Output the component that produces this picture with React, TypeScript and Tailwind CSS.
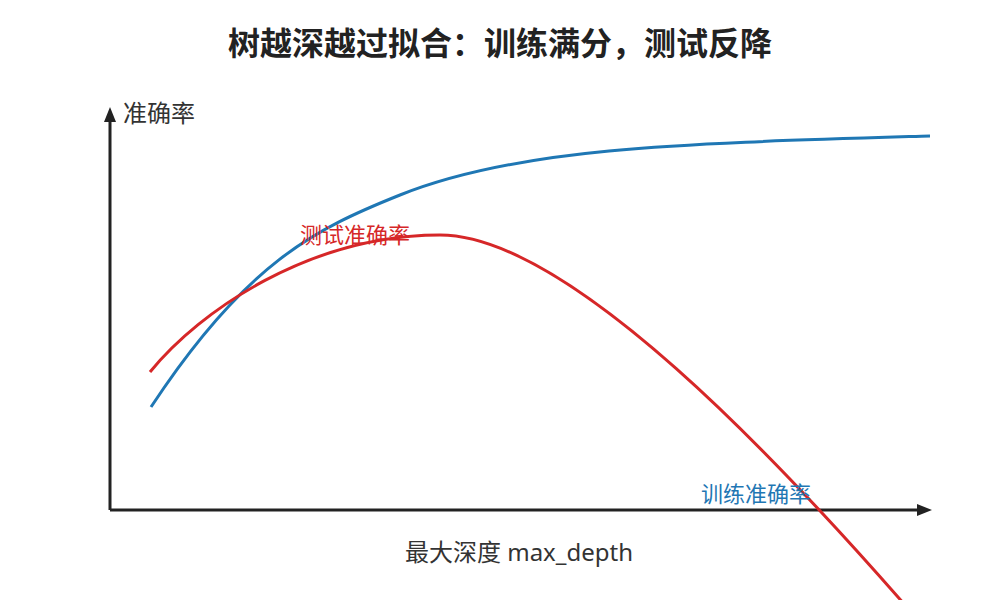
import React from 'react';

const font = '"Noto Sans", "Noto Sans CJK SC", sans-serif';

// training accuracy keeps climbing and flattens out near the top
const trainPath =
  'M 151 407 C 246 262.6, 315 229, 400 195 C 520 147, 680 143.5, 930 136';

// test accuracy peaks around the middle, then falls off the chart
const testPath =
  'M 150 372 C 200 310.5, 310 235, 440 235 C 570 235, 785 468, 905 605';

export default function App() {
  return (
    <div className="w-[1000px] h-[600px] bg-white overflow-hidden flex flex-col" style={{ fontFamily: font }}>
      {/* Title */}
      <div className="h-[90px] flex items-center justify-center text-[32px] font-bold text-[#222] pb-[4px]">
        树越深越过拟合：训练满分，测试反降
      </div>

      {/* Chart */}
      <svg width="1000" height="510" viewBox="0 90 1000 510" className="block">
        {/* axes */}
        <line x1="110" y1="510" x2="110" y2="120" stroke="#222" strokeWidth="3" />
        <polygon points="110,107 104,122 116,122" fill="#222" />
        <line x1="110" y1="510" x2="920" y2="510" stroke="#222" strokeWidth="3" />
        <polygon points="932,510 917,504 917,516" fill="#222" />

        {/* curves */}
        <path d={trainPath} fill="none" stroke="#1f77b4" strokeWidth="3" />
        <path d={testPath} fill="none" stroke="#d62728" strokeWidth="3" />

        {/* labels */}
        <text x="123" y="122" fontSize="24" fill="#333" fontFamily={font}>准确率</text>
        <text x="300" y="243" fontSize="22" fill="#d62728" fontFamily={font}>测试准确率</text>
        <text x="701" y="502" fontSize="22" fill="#1f77b4" fontFamily={font}>训练准确率</text>
        <text x="519" y="561" fontSize="24" fill="#333" textAnchor="middle" fontFamily={font}>最大深度 max_depth</text>
      </svg>
    </div>
  );
}
